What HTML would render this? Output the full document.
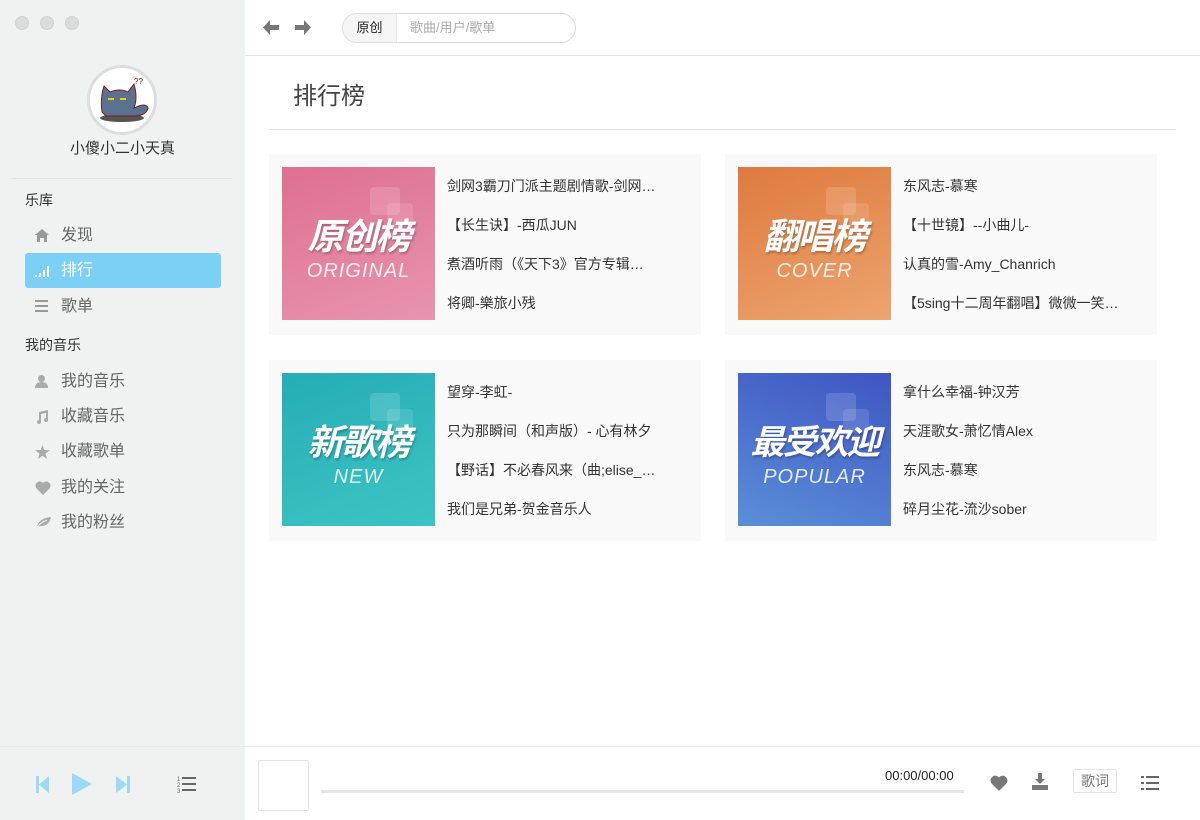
<!DOCTYPE html>
<html><head><meta charset="utf-8"><style>
*{margin:0;padding:0;box-sizing:border-box}
body{width:1200px;height:820px;overflow:hidden;background:#fff;font-family:"Liberation Sans","Noto Sans CJK SC",sans-serif;position:relative;color:#333}
.side{position:absolute;left:0;top:0;width:245px;height:820px;background:#f0f1f1}
.dot{position:absolute;top:16px;width:14px;height:14px;border-radius:50%;background:#dcdcdc;border:1px solid #d0d0d0}
.avatar{position:absolute;left:87px;top:65px;width:70px;height:70px;border-radius:50%;background:#fff;border:3px solid #ddd;overflow:hidden}
.uname{position:absolute;left:0;width:245px;top:137px;text-align:center;font-size:15px;color:#333}
.sep{position:absolute;left:12px;width:220px;top:178px;border-top:1px solid #e3e5e5}
.sec{position:absolute;left:25px;font-size:14px;color:#333}
.item{position:absolute;left:25px;width:196px;height:35px;line-height:35px;font-size:16px;color:#666;padding-left:36px}
.item svg{position:absolute;left:10px;top:11px}
.item.act{background:#7dd0f5;color:#fff;border-radius:3px}
.top{position:absolute;left:245px;top:0;right:0;height:56px;border-bottom:1px solid #e4e4e4}
.search{position:absolute;left:342px;top:13px;width:234px;height:30px;border:1px solid #ddd;border-radius:15px;overflow:hidden;font-size:13px}
.search .a{position:absolute;left:0;top:0;width:54px;height:30px;line-height:28px;text-align:center;background:#f5f5f5;border-right:1px solid #e5e5e5;color:#222}
.search .b{position:absolute;left:67px;top:0;line-height:28px;color:#aaa}
h1{position:absolute;left:293px;top:76px;font-size:24px;font-weight:normal;color:#444}
.hl{position:absolute;left:269px;width:907px;top:129px;border-top:1px solid #e2e2e2}
.card{position:absolute;width:432px;height:181px;background:#f9f9f9}
.cov{position:absolute;left:13px;top:13px;width:153px;height:153px;overflow:hidden}
.cov .t{position:absolute;left:0;width:153px;text-align:center;top:50px;height:40px;line-height:40px;font-size:36px;font-weight:bold;font-style:italic;color:#fff;letter-spacing:-2px;text-shadow:1px 2px 2px rgba(0,0,0,.25)}
.cov .e{position:absolute;left:0;width:153px;text-align:center;top:92px;line-height:24px;font-size:20px;color:rgba(255,255,255,.85);letter-spacing:1px;font-style:italic}
.cov .sq{position:absolute;left:88px;top:20px;width:30px;height:28px;border-radius:4px;background:rgba(255,255,255,.15)}
.cov .sq2{position:absolute;left:105px;top:36px;width:26px;height:24px;border-radius:4px;background:rgba(255,255,255,.12)}
.lst{position:absolute;left:178px;top:22px;font-size:14px;color:#333;width:240px}
.lst div{height:39px;white-space:nowrap;overflow:hidden}
.player{position:absolute;left:245px;top:746px;right:0;height:74px;border-top:1px solid #e8e8e8;background:#fff}
.sbot{position:absolute;left:0;top:746px;width:245px;border-top:1px solid #e8e9e9}
</style></head><body>
<div class="side">
<div class="dot" style="left:15px"></div><div class="dot" style="left:40px"></div><div class="dot" style="left:65px"></div>
<div class="avatar"><svg width="64" height="64" viewBox="0 0 64 64"><ellipse cx="32" cy="50" rx="22" ry="4" fill="#555"/><path d="M12 44 Q10 30 14 18 L20 24 Q30 20 38 24 L44 16 Q48 30 44 40 Q56 34 58 40 Q56 48 44 48 L16 48 Z" fill="#5a7190" stroke="#7a2020" stroke-width="1"/><rect x="18" y="30" width="6" height="2" fill="#f2d200"/><rect x="30" y="30" width="6" height="2" fill="#f2d200"/><text x="44" y="16" font-size="8" fill="#b00" font-family="Liberation Sans">??</text></svg></div>
<div class="uname">小傻小二小天真</div>
<div class="sep"></div>
<div class="sec" style="top:190px">乐库</div>
<div class="item" style="top:218px"><svg width="14" height="13" viewBox="0 0 14 13"><path d="M7 0 L14 6 L12 6 L12 13 L9 13 L9 9 L5 9 L5 13 L2 13 L2 6 L0 6Z" fill="#999"/></svg>发现</div>
<div class="item act" style="top:253px"><svg width="16" height="13" viewBox="0 0 16 13"><rect x="0" y="11" width="2" height="2" fill="#fff"/><rect x="4" y="9" width="2" height="4" fill="#fff"/><rect x="8" y="6" width="2" height="7" fill="#fff"/><rect x="12" y="2" width="2" height="11" fill="#fff"/></svg>排行</div>
<div class="item" style="top:289px"><svg width="14" height="12" viewBox="0 0 14 12"><rect y="0" width="13" height="2" fill="#999"/><rect y="5" width="13" height="2" fill="#999"/><rect y="10" width="13" height="2" fill="#999"/></svg>歌单</div>
<div class="sec" style="top:335px">我的音乐</div>
<div class="item" style="top:364px"><svg width="13" height="13" viewBox="0 0 13 13"><circle cx="6.5" cy="3.5" r="3.5" fill="#aaa"/><path d="M0 13 Q0 7 6.5 7 Q13 7 13 13Z" fill="#aaa"/></svg>我的音乐</div>
<div class="item" style="top:399px"><svg width="14" height="14" viewBox="0 0 14 14"><path d="M4 2 L13 0 L13 10 A2 2 0 1 1 11 8 L11 3 L6 4 L6 12 A2 2 0 1 1 4 10Z" fill="#aaa"/></svg>收藏音乐</div>
<div class="item" style="top:434px"><svg width="15" height="14" viewBox="0 0 15 14"><path d="M7.5 0 L9.3 5 L15 5.2 L10.5 8.5 L12 14 L7.5 10.8 L3 14 L4.5 8.5 L0 5.2 L5.7 5Z" fill="#aaa"/></svg>收藏歌单</div>
<div class="item" style="top:470px"><svg width="16" height="14" viewBox="0 0 16 14"><path d="M8 14 L1.5 7.5 A4 4 0 0 1 8 2 A4 4 0 0 1 14.5 7.5Z" fill="#aaa"/></svg>我的关注</div>
<div class="item" style="top:505px"><svg width="16" height="13" viewBox="0 0 16 13"><path d="M1 12 Q4 2 16 1 Q14 11 4 10 Z" fill="#aaa"/><path d="M0 13 Q6 6 12 4" stroke="#f0f1f1" stroke-width="1" fill="none"/></svg>我的粉丝</div>
<div class="sbot"></div>
<svg style="position:absolute;left:36px;top:776px" width="14" height="17" viewBox="0 0 14 17"><rect x="0" y="0" width="3" height="17" fill="#9bdaf5"/><path d="M13 0 L13 17 L3 8.5Z" fill="#9bdaf5"/></svg>
<svg style="position:absolute;left:72px;top:773px" width="20" height="22" viewBox="0 0 20 22"><path d="M0 0 L20 11 L0 22Z" fill="#9bdaf5"/></svg>
<svg style="position:absolute;left:116px;top:776px" width="14" height="17" viewBox="0 0 14 17"><rect x="11" y="0" width="3" height="17" fill="#9bdaf5"/><path d="M0 0 L0 17 L11 8.5Z" fill="#9bdaf5"/></svg>
<svg style="position:absolute;left:177px;top:775px" width="20" height="19" viewBox="0 0 20 19"><text x="0" y="6" font-size="6" fill="#666" font-family="Liberation Sans">1</text><text x="0" y="12" font-size="6" fill="#666" font-family="Liberation Sans">2</text><text x="0" y="18" font-size="6" fill="#666" font-family="Liberation Sans">3</text><rect x="5" y="2" width="14" height="2" fill="#666"/><rect x="5" y="8" width="14" height="2" fill="#666"/><rect x="5" y="14" width="14" height="2" fill="#666"/></svg>
</div>
<div class="top"></div>
<svg style="position:absolute;left:263px;top:20px" width="16" height="15" viewBox="0 0 16 15"><path d="M7 0 L0 7.5 L7 15 L7 10 L16 10 L16 5 L7 5Z" fill="#777"/></svg>
<svg style="position:absolute;left:295px;top:20px" width="16" height="15" viewBox="0 0 16 15"><path d="M9 0 L16 7.5 L9 15 L9 10 L0 10 L0 5 L9 5Z" fill="#777"/></svg>
<div class="search"><div class="a">原创</div><div class="b">歌曲/用户/歌单</div></div>
<h1>排行榜</h1>
<div class="hl"></div>

<div class="card" style="left:269px;top:154px"><div class="cov" style="background:linear-gradient(160deg,#de6f92,#e894b0)"><div class="sq"></div><div class="sq2"></div><div class="t">原创榜</div><div class="e">ORIGINAL</div></div>
<div class="lst"><div>剑网3霸刀门派主题剧情歌-剑网…</div><div>【长生诀】-西瓜JUN</div><div>煮酒听雨（《天下3》官方专辑…</div><div>将卿-樂旅小残</div></div></div>

<div class="card" style="left:725px;top:154px"><div class="cov" style="background:linear-gradient(160deg,#de7a3e,#eda46f)"><div class="sq"></div><div class="sq2"></div><div class="t">翻唱榜</div><div class="e">COVER</div></div>
<div class="lst"><div>东风志-慕寒</div><div>【十世镜】--小曲儿-</div><div>认真的雪-Amy_Chanrich</div><div>【5sing十二周年翻唱】微微一笑…</div></div></div>

<div class="card" style="left:269px;top:360px"><div class="cov" style="background:linear-gradient(160deg,#25adb5,#3cc4c4)"><div class="sq"></div><div class="sq2"></div><div class="t">新歌榜</div><div class="e">NEW</div></div>
<div class="lst"><div>望穿-李虹-</div><div>只为那瞬间（和声版）- 心有林夕</div><div>【野话】不必春风来（曲;elise_…</div><div>我们是兄弟-贺金音乐人</div></div></div>

<div class="card" style="left:725px;top:360px"><div class="cov" style="background:linear-gradient(200deg,#3f55c2,#5a8fd8)"><div class="sq"></div><div class="sq2"></div><div class="t" style="font-size:34px">最受欢迎</div><div class="e">POPULAR</div></div>
<div class="lst"><div>拿什么幸福-钟汉芳</div><div>天涯歌女-萧忆情Alex</div><div>东风志-慕寒</div><div>碎月尘花-流沙sober</div></div></div>

<div class="player">
<div style="position:absolute;left:13px;top:13px;width:51px;height:51px;border:1px solid #e3e3e3;border-radius:2px"></div>
<div style="position:absolute;left:76px;top:43px;width:643px;height:3px;background:#e6e6e6"></div>
<div style="position:absolute;left:640px;top:21px;font-size:13px;color:#222">00:00/00:00</div>
<svg style="position:absolute;left:745px;top:28px" width="18" height="16" viewBox="0 0 16 14"><path d="M8 14 L1.5 7.5 A4 4 0 0 1 8 2 A4 4 0 0 1 14.5 7.5Z" fill="#777"/></svg>
<svg style="position:absolute;left:787px;top:26px" width="16" height="17" viewBox="0 0 16 17"><path d="M6 0 L10 0 L10 6 L13 6 L8 11 L3 6 L6 6Z" fill="#777"/><rect x="0" y="12" width="16" height="5" fill="#777"/></svg>
<div style="position:absolute;left:828px;top:22px;width:44px;height:24px;border:1px solid #e3e3e3;border-radius:2px;font-size:14px;color:#777;text-align:center;line-height:22px">歌词</div>
<svg style="position:absolute;left:896px;top:29px" width="18" height="14" viewBox="0 0 18 14"><rect x="0" y="0" width="3" height="2" fill="#666"/><rect x="5" y="0" width="13" height="2" fill="#666"/><rect x="0" y="6" width="3" height="2" fill="#666"/><rect x="5" y="6" width="13" height="2" fill="#666"/><rect x="0" y="12" width="3" height="2" fill="#666"/><rect x="5" y="12" width="13" height="2" fill="#666"/></svg>
</div>
</body></html>
